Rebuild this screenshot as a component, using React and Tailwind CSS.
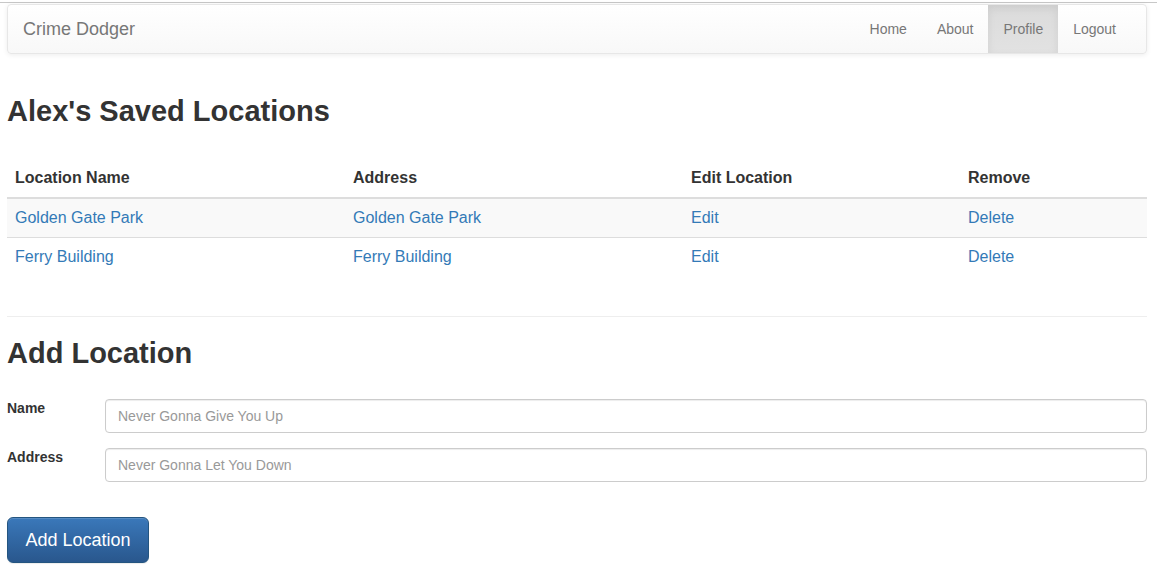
const locations = [
  { name: "Golden Gate Park", address: "Golden Gate Park" },
  { name: "Ferry Building", address: "Ferry Building" },
];

const navLinks = ["Home", "About", "Profile", "Logout"];

const Navbar = () => (
  <nav className="ml-[7px] mr-[10px] mt-[1px] flex h-[50px] items-center justify-between rounded-[4px] border border-[#e7e7e7] bg-gradient-to-b from-white to-[#f8f8f8] shadow-[inset_0_1px_0_rgba(255,255,255,0.15),0_1px_5px_rgba(0,0,0,0.075)]">
    <a className="pl-[15px] text-[18px] leading-[20px] text-[#777]">Crime Dodger</a>
    <ul className="flex h-full pr-[15px]">
      {navLinks.map((link) => (
        <li
          key={link}
          className={`flex h-full items-center px-[15px] text-[14px] text-[#777] ${
            link === "Profile"
              ? "bg-gradient-to-b from-[#dbdbdb] to-[#e2e2e2] text-[#555] shadow-[inset_0_3px_9px_rgba(0,0,0,0.075)]"
              : ""
          }`}
        >
          {link}
        </li>
      ))}
    </ul>
  </nav>
);

const App = () => {
  return (
    <div className="min-h-screen bg-white text-[16px] text-[#333]" style={{ fontFamily: '"Liberation Sans", Arial, sans-serif' }}>
      <div className="h-[2px] bg-white" />
      <div className="h-[1px] bg-[#c8c8c8]" />
      <Navbar />

      <div className="px-[7px]">
        {/* Saved locations */}
        <h2 className="mt-[41px] text-[29px] font-bold leading-[33px]">Alex's Saved Locations</h2>

        <table className="mt-[31px] w-[1140px] border-collapse">
          <thead>
            <tr className="border-b-2 border-[#ddd] text-left">
              <th className="w-[338px] p-[8px] leading-[22px] font-bold">Location Name</th>
              <th className="w-[338px] p-[8px] leading-[22px] font-bold">Address</th>
              <th className="w-[277px] p-[8px] leading-[22px] font-bold">Edit Location</th>
              <th className="p-[8px] leading-[22px] font-bold">Remove</th>
            </tr>
          </thead>
          <tbody>
            {locations.map((loc, i) => (
              <tr
                key={loc.name}
                className={`${i === 0 ? "bg-[#f9f9f9] border-b border-[#ddd]" : ""}`}
              >
                <td className="p-[8px] leading-[22px] text-[#337ab7]">{loc.name}</td>
                <td className="p-[8px] leading-[22px] text-[#337ab7]">{loc.address}</td>
                <td className="p-[8px] leading-[22px] text-[#337ab7]">Edit</td>
                <td className="p-[8px] leading-[22px] text-[#337ab7]">Delete</td>
              </tr>
            ))}
          </tbody>
        </table>

        <hr className="mt-[40px] w-[1140px] border-t border-[#eee]" />

        {/* Add location form */}
        <h2 className="mt-[20px] text-[29px] font-bold leading-[33px]">Add Location</h2>

        <form className="mt-[29px] w-[1140px]">
          <div className="flex items-start">
            <label className="-mt-[1px] w-[98px] text-[14px] font-bold leading-[20px]">Name</label>
            <input
              className="h-[34px] flex-1 rounded-[4px] border border-[#ccc] px-[12px] text-[14px] shadow-[inset_0_1px_1px_rgba(0,0,0,0.075)] outline-none placeholder:text-[#999]"
              placeholder="Never Gonna Give You Up"
            />
          </div>
          <div className="mt-[15px] flex items-start">
            <label className="-mt-[1px] w-[98px] text-[14px] font-bold leading-[20px]">Address</label>
            <input
              className="h-[34px] flex-1 rounded-[4px] border border-[#ccc] px-[12px] text-[14px] shadow-[inset_0_1px_1px_rgba(0,0,0,0.075)] outline-none placeholder:text-[#999]"
              placeholder="Never Gonna Let You Down"
            />
          </div>
          <button
            type="button"
            className="mt-[35px] h-[46px] w-[142px] rounded-[6px] border border-[#245580] bg-gradient-to-b from-[#3a78ba] to-[#29578d] text-[18px] text-white shadow-[inset_0_1px_0_rgba(255,255,255,0.15),0_1px_1px_rgba(0,0,0,0.075)]"
          >
            Add Location
          </button>
        </form>
      </div>
    </div>
  );
};

export default App;
